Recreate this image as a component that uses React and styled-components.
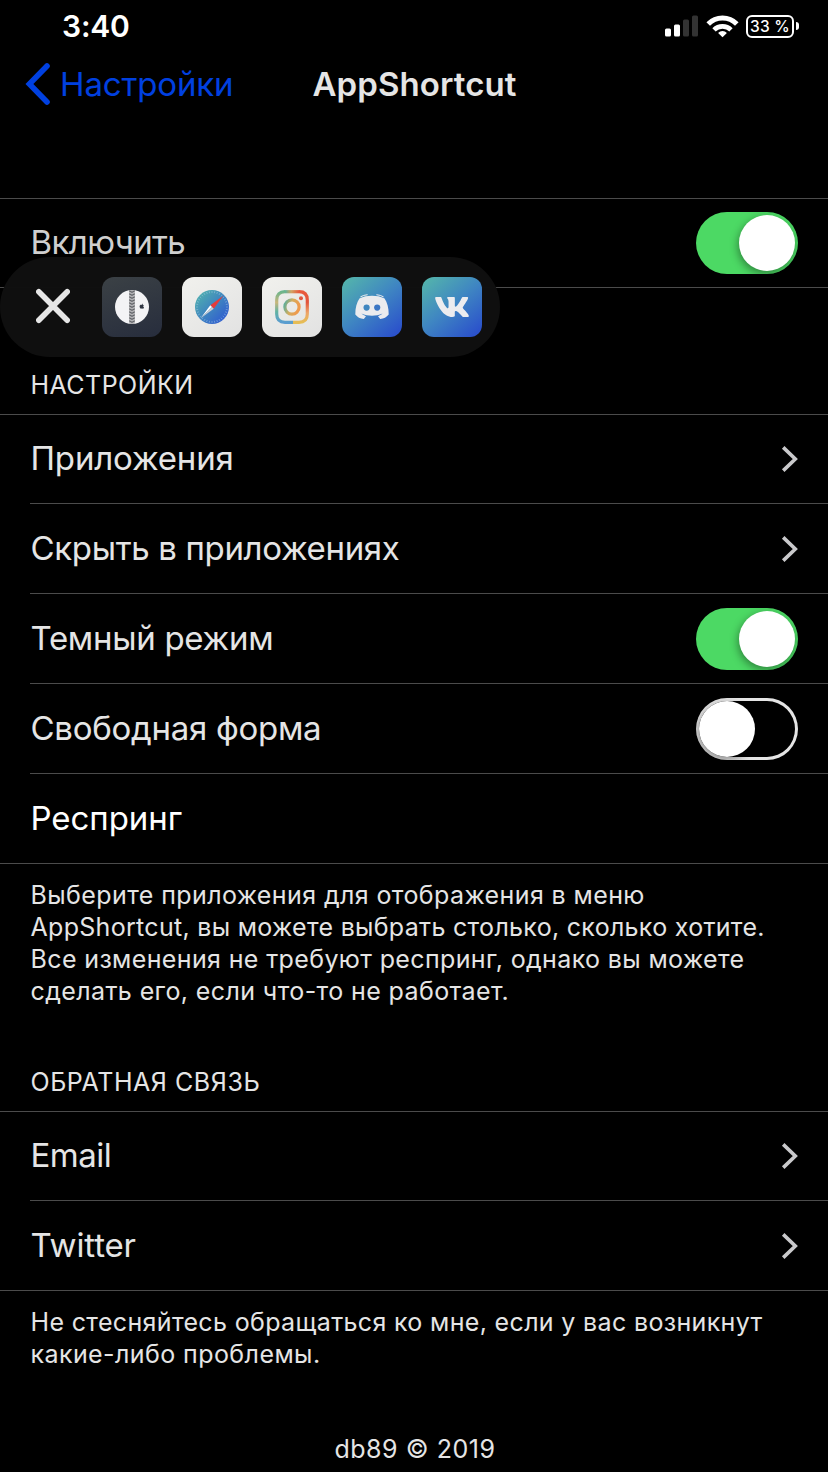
import React from "react";
import styled, { createGlobalStyle } from "styled-components";
import { FaVk, FaApple } from "react-icons/fa";

const GlobalStyle = createGlobalStyle`
  * { box-sizing: border-box; }
  body {
    margin: 0;
    background: #000;
    color: #e5e5e5;
    font-family: Inter, "Noto Sans", sans-serif;
  }
`;

const Screen = styled.div`
  position: relative;
  width: 828px;
  height: 1472px;
  overflow: hidden;
  background: #000;
  display: flex;
  flex-direction: column;
`;

const StatusBar = styled.header`
  height: 40px;
  flex: none;
  display: flex;
  align-items: center;
  justify-content: space-between;
  padding: 12px 29px 0 62px;
`;

const Clock = styled.span`
  color: #fff;
  font-size: 30px;
  line-height: 30px;
  font-weight: 600;
  letter-spacing: ${(p) => p.$track}px;
`;

const StatusIcons = styled.div`
  display: flex;
  align-items: center;
  gap: 8px;
`;

const BatteryWrap = styled.div`
  display: flex;
  align-items: center;
  gap: 2px;
  margin-left: -1px;
`;

const BatteryBody = styled.div`
  width: 48px;
  height: 23px;
  border: 2px solid #fff;
  border-radius: 6px;
  display: flex;
  align-items: center;
  justify-content: center;
  color: #fff;
  font-size: 15.5px;
  line-height: 19px;
  font-weight: 500;
  letter-spacing: 0.3px;
  white-space: nowrap;
`;

const BatteryCap = styled.div`
  width: 3px;
  height: 8px;
  border-radius: 0 4px 4px 0;
  background: #fff;
`;

const NavBar = styled.nav`
  height: 88px;
  flex: none;
  display: grid;
  grid-template-columns: 1fr auto 1fr;
  align-items: center;
  padding: 0 23px 0 24px;
`;

const BackLink = styled.div`
  display: flex;
  align-items: center;
  gap: 10px;
  color: #0040e0;
  font-size: 33px;
  line-height: 40px;
  letter-spacing: ${(p) => p.$track}px;
`;

const NavTitle = styled.h1`
  margin: 0;
  font-size: 33px;
  line-height: 40px;
  font-weight: 600;
  letter-spacing: ${(p) => p.$track}px;
`;

const Group = styled.section`
  flex: none;
  margin-top: ${(p) => p.$gap || 0}px;
`;

const GroupTitle = styled.h2`
  margin: 0;
  padding: 0 30px 13px 30.5px;
  font-size: 25px;
  line-height: 32px;
  font-weight: 400;
  letter-spacing: ${(p) => p.$track}px;
`;

const Rows = styled.div`
  border-top: 1px solid #4b4b4b;
  border-bottom: 1px solid #4b4b4b;
`;

const Row = styled.div`
  height: ${(p) => p.$height || 90}px;
  margin-left: 30px;
  padding-right: 30px;
  display: flex;
  align-items: center;
  justify-content: space-between;
  border-bottom: 1px solid #4b4b4b;
  &:last-child {
    height: ${(p) => (p.$height || 90) - 1}px;
    border-bottom: 0;
  }
`;

const RowLabel = styled.span`
  font-size: 33px;
  line-height: 40px;
  padding: 0 0 2px 0.5px;
  white-space: nowrap;
  color: ${(p) => p.$color || "#e5e5e5"};
  letter-spacing: ${(p) => p.$track}px;
`;

const Note = styled.p`
  margin: 0;
  padding: 15px 30px 1px 30.5px;
  font-size: 25px;
  line-height: 32px;
`;

const NoteLine = styled.span`
  display: block;
  white-space: nowrap;
  letter-spacing: ${(p) => p.$track}px;
`;

const Credit = styled.footer`
  margin-top: 62px;
  padding-left: 2px;
  text-align: center;
  font-size: 25px;
  line-height: 32px;
  letter-spacing: ${(p) => p.$track}px;
`;

const Track = styled.div`
  width: 102px;
  height: 62px;
  border-radius: 31px;
  padding: 3px;
  box-shadow: ${(p) => (p.$on ? "none" : "inset 0 0 0 3px #e5e5e5")};
  background: ${(p) => (p.$on ? "#4cd964" : "#000")};
  display: flex;
  justify-content: ${(p) => (p.$on ? "flex-end" : "flex-start")};
  overflow: hidden;
`;

const Knob = styled.div`
  width: 56px;
  height: 56px;
  border-radius: 50%;
  background: #fff;
  box-shadow: -1px 3px 8px rgba(0, 0, 0, 0.4);
`;

const Dock = styled.div`
  position: absolute;
  left: 0;
  top: 257px;
  width: 500px;
  height: 100px;
  border-radius: 50px;
  background: rgba(15, 15, 15, 0.98);
  display: flex;
  align-items: center;
  gap: 20px;
  padding-left: 36px;
`;

const CloseButton = styled.div`
  width: 46px;
  height: 36px;
  margin-top: -2px;
`;

const tileFills = {
  dark: "linear-gradient(160deg, #3b4145, #272d3d)",
  light: "linear-gradient(145deg, #f1f1ed, #e2e2e2)",
  blue: "linear-gradient(140deg, #53b3ac 5%, #3f86c2 48%, #2b52cb 92%)",
};

const Tile = styled.div`
  width: 60px;
  height: 60px;
  border-radius: 12px;
  background: ${(p) => tileFills[p.$fill]};
  color: #ececef;
  display: flex;
  align-items: center;
  justify-content: center;
`;

const Switch = ({ on }) => (
  <Track $on={on}>
    <Knob />
  </Track>
);

const Disclosure = () => (
  <svg width="18" height="28" viewBox="0 0 18 28" fill="none">
    <path d="M3.2 2.4 L15.3 14 L3.2 25.6" stroke="#c9c9cb" strokeWidth="3.6" />
  </svg>
);

const Signal = () => (
  <svg width="33" height="22" viewBox="0 0 33 22">
    <rect x="0" y="13.5" width="6" height="8" rx="1.5" fill="#fff" />
    <rect x="9" y="9.5" width="6" height="12" rx="1.5" fill="#fff" />
    <rect x="18" y="4.5" width="6" height="17" rx="1.5" fill="#333" />
    <rect x="27" y="0.5" width="6" height="21" rx="1.5" fill="#333" />
  </svg>
);

const Wifi = () => (
  <svg width="33" height="23" viewBox="0 0 33 23" fill="none" stroke="#fff">
    <path d="M2.2 9.1 A20 20 0 0 1 30.8 9.1" strokeWidth="5" />
    <path d="M8 14.9 A12 12 0 0 1 25 14.9" strokeWidth="4.6" />
    <path d="M16.5 22.2 L12.1 17.9 A6.3 6.3 0 0 1 20.9 17.9 Z" fill="#fff" stroke="none" />
  </svg>
);

const Battery = () => (
  <BatteryWrap>
    <BatteryBody>33 %</BatteryBody>
    <BatteryCap />
  </BatteryWrap>
);

const stitchRows = Array.from({ length: 11 }, (_, i) => 1.5 + i * 3);

const Baseball = () => (
  <svg width="34" height="34" viewBox="0 0 34 34">
    <circle cx="17" cy="17" r="17" fill="#f3f3f5" />
    <path d="M17 0 V34" stroke="#b4b4b7" strokeWidth="5.8" />
    {stitchRows.map((y) => (
      <path
        key={y}
        d={`M14.2 ${y - 0.8} L17 ${y + 0.8} L19.8 ${y - 0.8}`}
        fill="none"
        stroke="#63656a"
        strokeWidth="1.1"
      />
    ))}
    <FaApple x="23.8" y="13.2" size={6} color="#303642" />
  </svg>
);

const ticks = Array.from({ length: 36 }, (_, i) => i * 10);

const Compass = () => (
  <svg width="34" height="34" viewBox="0 0 34 34">
    <defs>
      <linearGradient id="compassFace" x1="0.1" y1="0.1" x2="0.9" y2="0.9">
        <stop offset="0" stopColor="#4fafaf" />
        <stop offset="1" stopColor="#2f5bd0" />
      </linearGradient>
    </defs>
    <circle cx="17" cy="17" r="17" fill="url(#compassFace)" />
    {ticks.map((a) => (
      <path
        key={a}
        d="M17 1 V3"
        stroke="#b5d3ea"
        strokeWidth="0.4"
        transform={`rotate(${a} 17 17)`}
      />
    ))}
    <path d="M28.3 5.7 L15.3 15.3 L18.7 18.7 Z" fill="#e43b3b" />
    <path d="M5.7 28.3 L15.3 15.3 L17 17 Z" fill="#fff" />
    <path d="M5.7 28.3 L18.7 18.7 L17 17 Z" fill="#c9ccd2" />
  </svg>
);

const Camera = () => (
  <svg width="34" height="34" viewBox="0 0 34 34" fill="none">
    <defs>
      <linearGradient id="camLeft" x1="0" y1="0" x2="0" y2="1">
        <stop offset="0" stopColor="#6bb58c" />
        <stop offset="0.35" stopColor="#c9b67a" />
        <stop offset="0.65" stopColor="#62b3a1" />
        <stop offset="1" stopColor="#5a9dd0" />
      </linearGradient>
      <linearGradient id="camRight" x1="0" y1="0" x2="0" y2="1">
        <stop offset="0" stopColor="#e8593c" />
        <stop offset="0.35" stopColor="#e2543c" />
        <stop offset="0.7" stopColor="#eda568" />
        <stop offset="1" stopColor="#e6bd55" />
      </linearGradient>
      <linearGradient id="camTop" x1="0" y1="0" x2="1" y2="0">
        <stop offset="0" stopColor="#5fb39a" />
        <stop offset="0.45" stopColor="#d2a464" />
        <stop offset="1" stopColor="#e8593c" />
      </linearGradient>
      <linearGradient id="camRing" x1="0" y1="0" x2="1" y2="0.3">
        <stop offset="0" stopColor="#55ad9c" />
        <stop offset="0.5" stopColor="#d4ad5e" />
        <stop offset="1" stopColor="#ee9a4c" />
      </linearGradient>
    </defs>
    <path d="M10 1.7 Q1.7 1.7 1.7 10 V24 Q1.7 32.3 10 32.3 H18" stroke="url(#camLeft)" strokeWidth="3.2" />
    <path d="M24 1.7 Q32.3 1.7 32.3 10 V24 Q32.3 32.3 24 32.3 H18" stroke="url(#camRight)" strokeWidth="3.2" />
    <path d="M10 0.1 H24 V3.3 H10 Z" fill="url(#camTop)" />
    <circle cx="17" cy="17" r="7.1" stroke="url(#camRing)" strokeWidth="3.2" />
    <circle cx="26" cy="8.2" r="2" fill="#e0553c" />
  </svg>
);

const Gamepad = () => (
  <svg width="34" height="26" viewBox="0 0 34 26">
    <path
      fill="#ebebee"
      d="M4.4 4.6 C8.5 2.4 12.4 1.8 17 1.8 C21.6 1.8 25.5 2.4 29.6 4.6 C32.2 8.6 33.8 14 33.7 20.6 C31.6 23.3 28.8 24.8 25.2 25 L23 22.2 C24.9 21.6 26.4 20.8 27.6 19.6 C20.8 22.6 13.2 22.6 6.4 19.6 C7.6 20.8 9.1 21.6 11 22.2 L8.8 25 C5.2 24.8 2.4 23.3 0.3 20.6 C0.2 14 1.8 8.6 4.4 4.6 Z"
    />
    <path
      fill="none"
      stroke="#ebebee"
      strokeWidth="1"
      d="M5.4 2.9 Q8.6 1 12.6 0.7 M28.6 2.9 Q25.4 1 21.4 0.7"
    />
    <circle cx="11.6" cy="13.6" r="3.1" fill="#3f86c0" />
    <circle cx="22.2" cy="13.6" r="3.1" fill="#3b76c4" />
  </svg>
);

export default function App() {
  return (
    <>
      <GlobalStyle />
      <Screen>
        <StatusBar>
          <Clock $track={-0.2}>3:40</Clock>
          <StatusIcons>
            <Signal />
            <Wifi />
            <Battery />
          </StatusIcons>
        </StatusBar>
        <NavBar>
          <BackLink $track={-0.14}>
            <svg width="26" height="44" viewBox="0 0 26 44" fill="none">
              <path
                d="M23 4 L5.4 22 L23 40"
                stroke="currentColor"
                strokeWidth="5.6"
                strokeLinecap="round"
                strokeLinejoin="miter"
              />
            </svg>
            Настройки
          </BackLink>
          <NavTitle $track={0.1}>AppShortcut</NavTitle>
        </NavBar>

        <Group $gap={70}>
          <Rows>
            <Row $height={89}>
              <RowLabel $track={-0.6} $color="#cfcfcf">Включить</RowLabel>
              <Switch on />
            </Row>
          </Rows>
        </Group>

        <Group $gap={81}>
          <GroupTitle $track={0.45}>НАСТРОЙКИ</GroupTitle>
          <Rows>
            <Row $height={89}>
              <RowLabel $track={-0.17}>Приложения</RowLabel>
              <Disclosure />
            </Row>
            <Row>
              <RowLabel $track={-0.34}>Скрыть в приложениях</RowLabel>
              <Disclosure />
            </Row>
            <Row>
              <RowLabel $track={-0.3}>Темный режим</RowLabel>
              <Switch on />
            </Row>
            <Row>
              <RowLabel $track={-0.27}>Свободная форма</RowLabel>
              <Switch />
            </Row>
            <Row>
              <RowLabel $track={-0.05} $color="#fff">Респринг</RowLabel>
            </Row>
          </Rows>
          <Note>
            <NoteLine $track={0.4}>Выберите приложения для отображения в меню</NoteLine>
            <NoteLine $track={0.3}>AppShortcut, вы можете выбрать столько, сколько хотите.</NoteLine>
            <NoteLine $track={0.37}>Все изменения не требуют респринг, однако вы можете</NoteLine>
            <NoteLine $track={0.39}>сделать его, если что-то не работает.</NoteLine>
          </Note>
        </Group>

        <Group $gap={58}>
          <GroupTitle $track={0.55}>ОБРАТНАЯ СВЯЗЬ</GroupTitle>
          <Rows>
            <Row $height={89}>
              <RowLabel $track={-0.5}>Email</RowLabel>
              <Disclosure />
            </Row>
            <Row>
              <RowLabel $track={-0.15}>Twitter</RowLabel>
              <Disclosure />
            </Row>
          </Rows>
          <Note>
            <NoteLine $track={0.34}>Не стесняйтесь обращаться ко мне, если у вас возникнут</NoteLine>
            <NoteLine $track={0.42}>какие-либо проблемы.</NoteLine>
          </Note>
        </Group>

        <Credit $track={0.55}>db89 © 2019</Credit>

        <Dock>
          <CloseButton>
            <svg width="34" height="36" viewBox="0 0 34 36">
              <path
                d="M2.8 3.8 L31.2 32.2 M31.2 3.8 L2.8 32.2"
                stroke="#e6e6e6"
                strokeWidth="5.6"
                strokeLinecap="round"
              />
            </svg>
          </CloseButton>
          <Tile $fill="dark"><Baseball /></Tile>
          <Tile $fill="light"><Compass /></Tile>
          <Tile $fill="light"><Camera /></Tile>
          <Tile $fill="blue"><Gamepad /></Tile>
          <Tile $fill="blue"><FaVk size={36} /></Tile>
        </Dock>
      </Screen>
    </>
  );
}
